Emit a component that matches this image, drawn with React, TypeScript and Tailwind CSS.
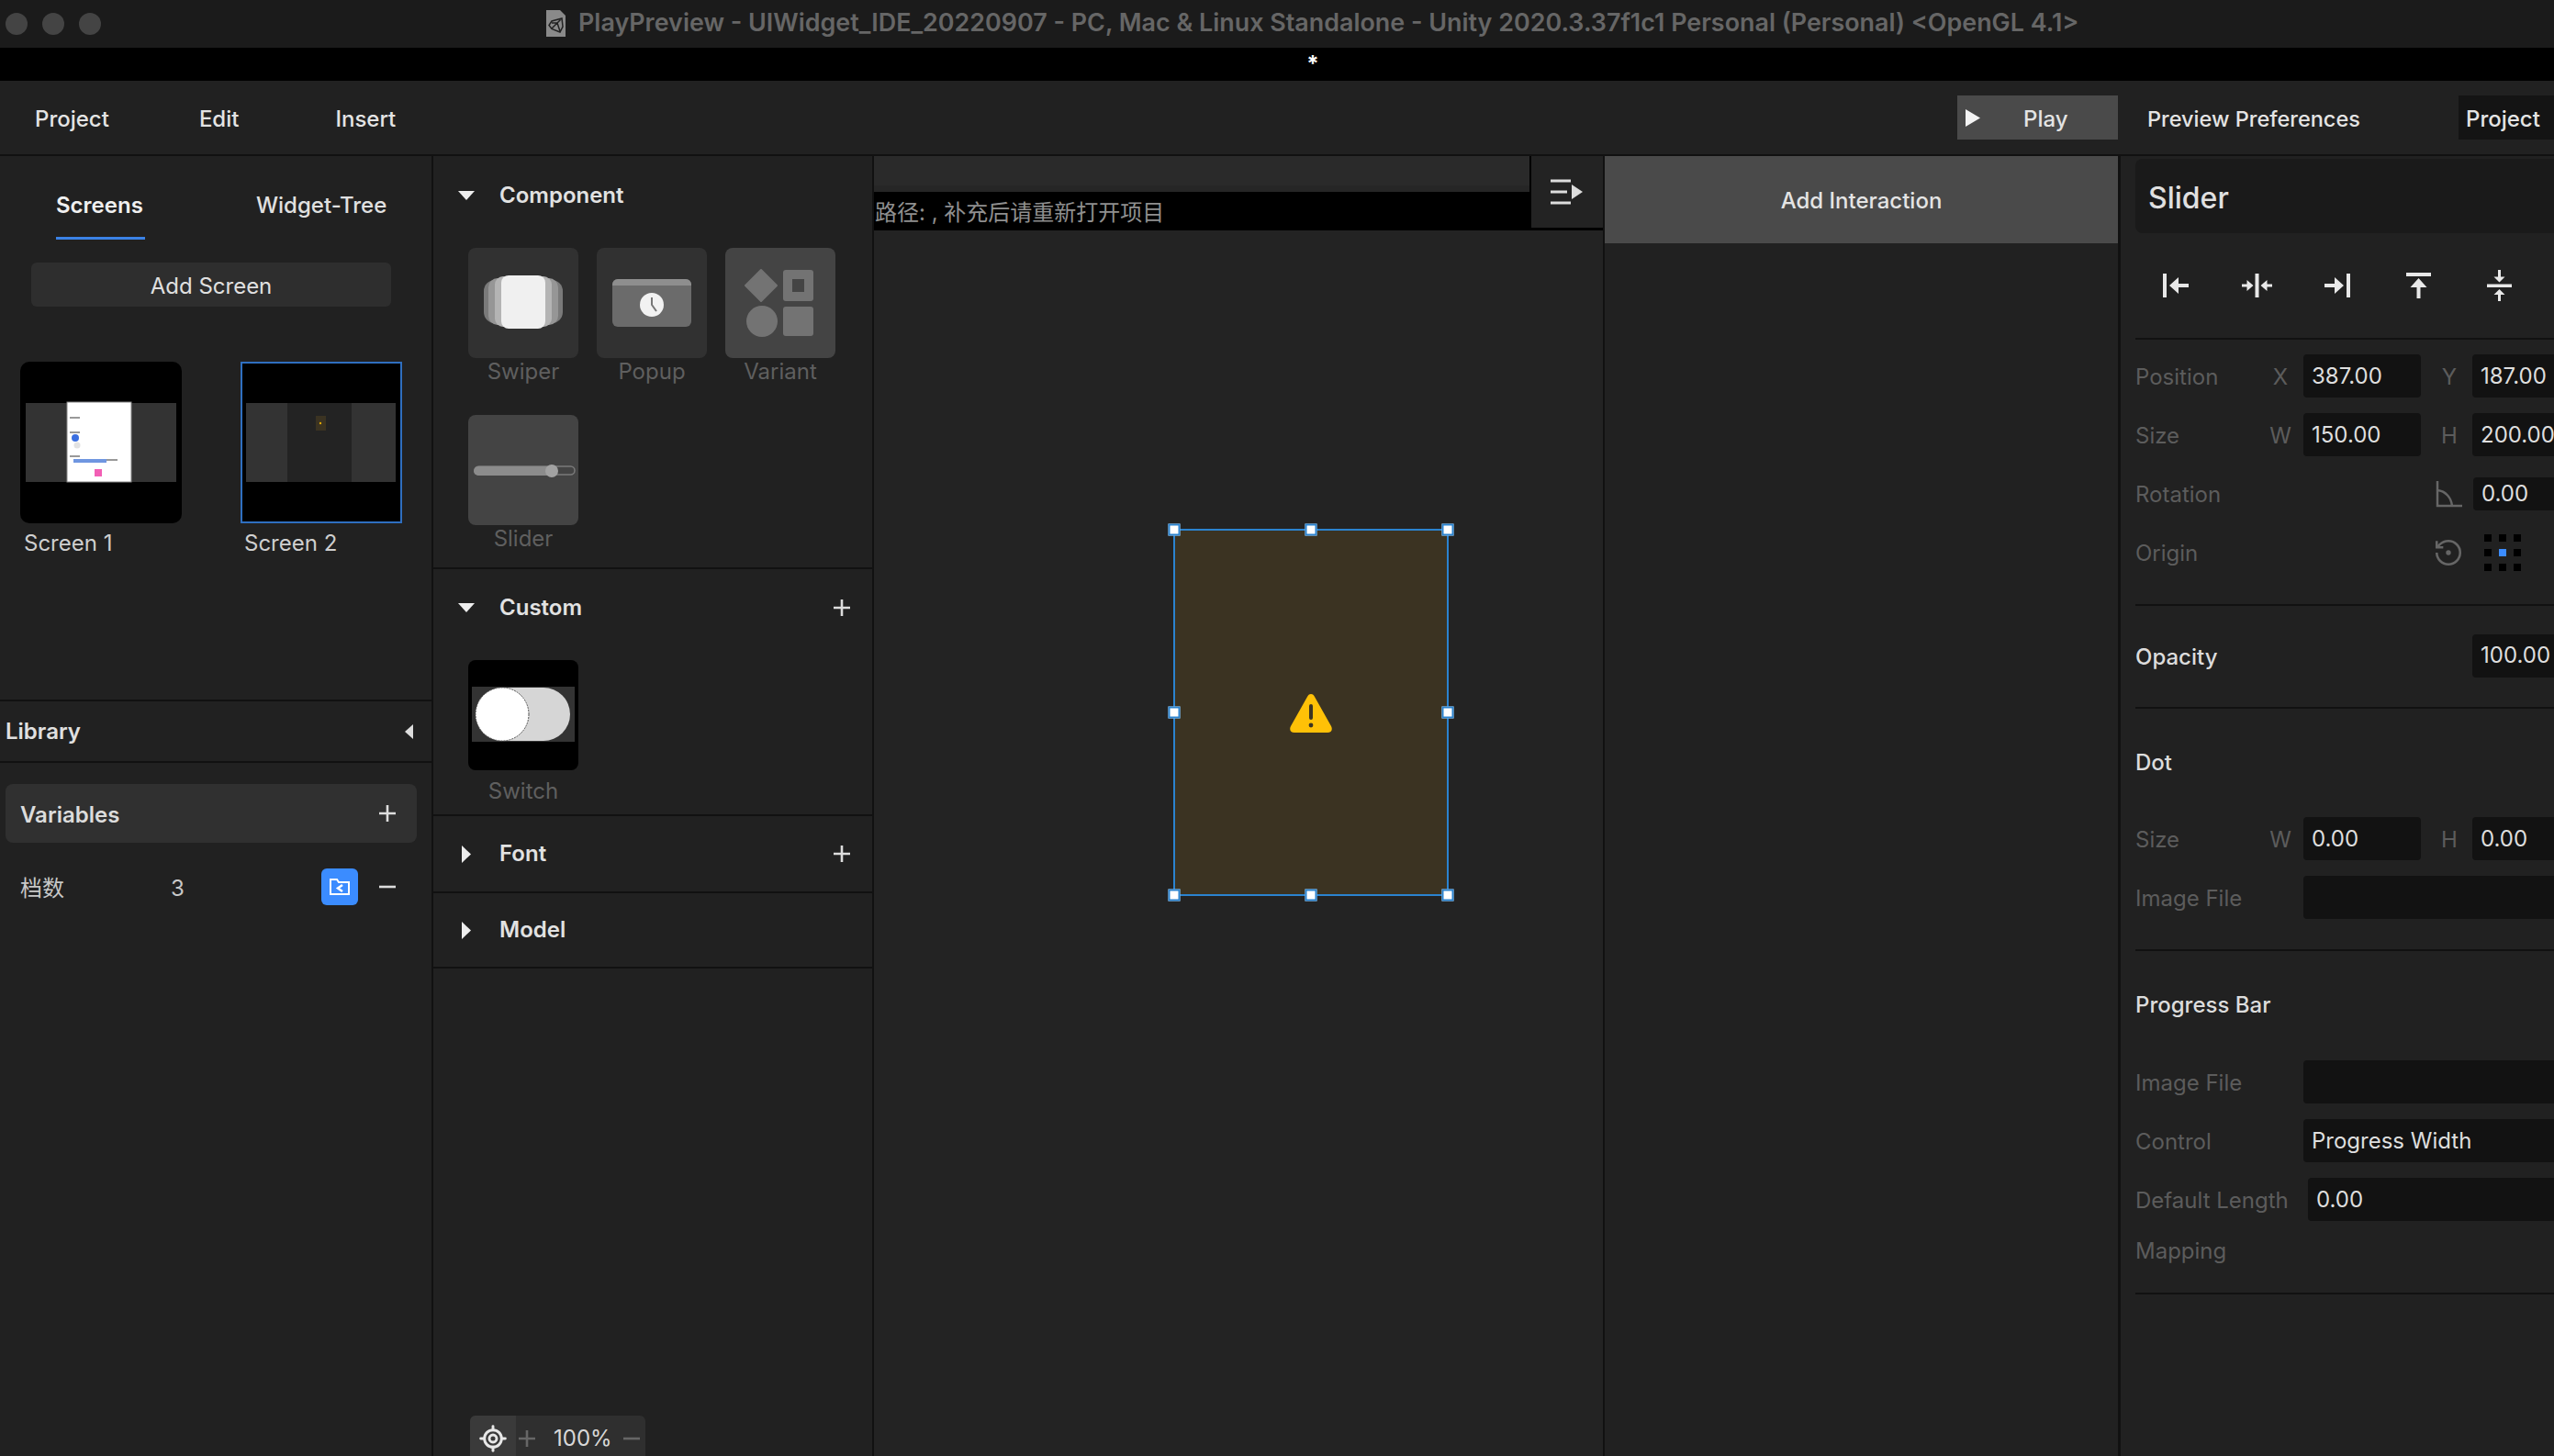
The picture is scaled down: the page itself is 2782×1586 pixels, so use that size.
import { LocateFixed } from 'lucide-react'

const inter = "font-['Inter','Noto_Sans_CJK_SC',sans-serif]"

/* ------------------------------------------------------------ small glyphs */
function TriDown() {
  return <svg width="18" height="10" viewBox="0 0 18 10" className="shrink-0"><path d="M0 0h18L9 10z" fill="#eee" /></svg>
}
function TriRight() {
  return <svg width="10" height="19" viewBox="0 0 10 19" className="shrink-0"><path d="M0 0l10 9.5L0 19z" fill="#eee" /></svg>
}
function Plus({ color = '#ddd', size = 20 }: { color?: string; size?: number }) {
  return <svg width={size} height={size} viewBox="0 0 20 20" className="shrink-0"><path d="M10 1v18M1 10h18" stroke={color} strokeWidth="2.6" /></svg>
}
function Minus({ color = '#ddd', size = 20 }: { color?: string; size?: number }) {
  return <svg width={size} height={size} viewBox="0 0 20 20" className="shrink-0"><path d="M1 10h18" stroke={color} strokeWidth="2.6" /></svg>
}

function AlignIcon({ kind }: { kind: 0 | 1 | 2 | 3 | 4 }) {
  const c = '#e8e8e8'
  return (
    <svg width="34" height="34" viewBox="0 0 34 34" className="shrink-0">
      {kind === 0 && <g fill={c}><rect x="3" y="4" width="4" height="26" /><path d="M10 17l10-9v7h11v4H20v7z" /></g>}
      {kind === 1 && <g fill={c}><rect x="15.5" y="4" width="4" height="26" /><path d="M13.500 17l-7-6v4.500H1v3h5.500V23zM21.500 17l7-6v4.500H34v3h-5.500V23z" /></g>}
      {kind === 2 && <g fill={c}><rect x="27" y="4" width="4" height="26" /><path d="M24 17l-10-9v7H3v4h11v7z" /></g>}
      {kind === 3 && <g fill={c}><rect x="4" y="3" width="27" height="4" /><path d="M17.500 9l9 10h-7v12h-4V19h-7z" /></g>}
      {kind === 4 && <g fill={c}><rect x="4" y="15.500" width="27" height="3.500" /><path d="M17.500 13.500l-6-6h4.500V0h3v7.500h4.500zM17.500 21l-6 6h4.500v7h3v-7h4.500z" /></g>}
    </svg>
  )
}

function UnityFile() {
  return (
    <svg width="21" height="29" viewBox="0 0 21 29" className="shrink-0">
      <path d="M0 0h15l6 6v23H0z" fill="#8a8a8a" />
      <path d="M17 9l1 9-3 6-9-3.500-3-4 3-4.500zM6 14h6l4-4M12 14l3 9M12 14l-6 6" fill="none" stroke="#222" strokeWidth="1.500" />
    </svg>
  )
}

/* -------------------------------------------------------- component tiles */
function SwiperArt() {
  return (
    <svg width="120" height="120" viewBox="0 0 120 120">
      <rect x="17" y="35" width="86" height="47" rx="12" fill="#7a7a7a" />
      <rect x="22" y="33" width="76" height="51" rx="10" fill="#969696" />
      <rect x="29" y="31" width="62" height="55" rx="9" fill="#b4b4b4" />
      <rect x="36" y="30" width="48" height="58" rx="8" fill="#f0f0f0" />
    </svg>
  )
}
function PopupArt() {
  return (
    <svg width="120" height="120" viewBox="0 0 120 120">
      <rect x="17" y="34" width="86" height="52" rx="6" fill="#6b6b6b" />
      <path d="M17 41v-1a6 6 0 0 1 6-6h74a6 6 0 0 1 6 6v1z" fill="#8e8e8e" />
      <circle cx="60" cy="62" r="13" fill="#f2f2f2" />
      <path d="M60 54v8l5 7" fill="none" stroke="#777" strokeWidth="2" />
    </svg>
  )
}
function VariantArt() {
  return (
    <svg width="120" height="120" viewBox="0 0 120 120">
      <path d="M39 24l17 17-17 17-17-17z" fill="#737373" stroke="#737373" strokeWidth="2" strokeLinejoin="round" />
      <rect x="63" y="24" width="33" height="34" rx="3" fill="#737373" />
      <rect x="73" y="34" width="13" height="14" fill="#444" />
      <circle cx="40" cy="80" r="17" fill="#737373" />
      <rect x="63" y="64" width="33" height="32" rx="3" fill="#737373" />
    </svg>
  )
}
function SliderArt() {
  return (
    <svg width="120" height="120" viewBox="0 0 120 120">
      <rect x="7" y="56" width="109" height="9" rx="4.500" fill="none" stroke="#7a7a7a" strokeWidth="1.500" />
      <rect x="6" y="56" width="86" height="10" rx="5" fill="#8c8c8c" />
      <circle cx="91" cy="61" r="7" fill="#a2a2a2" />
    </svg>
  )
}
function SwitchArt() {
  return (
    <svg width="120" height="120" viewBox="0 0 120 120">
      <rect x="4" y="29" width="112" height="60" fill="#333" />
      <rect x="8" y="30" width="103" height="58" rx="29" fill="#d6d6d6" />
      <circle cx="37" cy="59" r="29" fill="#fff" stroke="#555" strokeWidth="1" strokeDasharray="2 1" />
    </svg>
  )
}

function Tile({ label, bg, labelTop = 'mt-0', children }: { label: string; bg: string; labelTop?: string; children: React.ReactNode }) {
  return (
    <div className="w-[120px]">
      <div className={'h-[120px] w-[120px] overflow-hidden rounded-[8px] ' + bg}>{children}</div>
      <div className={'h-[30px] text-center text-[24px] leading-[30px] text-[#5f5f5f] ' + labelTop}>{label}</div>
    </div>
  )
}

function SectionHead({ title, open, plus }: { title: string; open: boolean; plus?: boolean }) {
  return (
    <div className="flex h-[24px] items-center pl-[27px] pr-[23px]">
      <span className="flex w-[45px] items-center">{open ? <TriDown /> : <span className="pl-[4px]"><TriRight /></span>}</span>
      <span className="text-[24px] font-semibold leading-[24px] text-[#e2e2e2]">{title}</span>
      {plus && <span className="ml-auto"><Plus /></span>}
    </div>
  )
}

/* ------------------------------------------------------------- thumbnails */
function Thumb1() {
  return (
    <svg width="176" height="176" viewBox="0 0 176 176" className="rounded-[10px] bg-black">
      <rect x="6" y="45" width="164" height="86" fill="#333" />
      <rect x="51" y="44" width="70" height="87" fill="#fff" stroke="#888" strokeWidth="1" />
      <g fill="#999">
        <rect x="54" y="60" width="11" height="2" />
        <rect x="54" y="76" width="11" height="2" />
        <rect x="54" y="102" width="11" height="2" />
      </g>
      <circle cx="60" cy="83" r="4" fill="#3a6ee0" />
      <circle cx="62" cy="91" r="3.500" fill="#e2e2e2" />
      <rect x="58" y="106" width="48" height="2" fill="#999" />
      <rect x="58" y="106" width="36" height="4" fill="#6f96e0" />
      <rect x="81" y="117" width="8" height="8" fill="#f25fb5" />
    </svg>
  )
}
function Thumb2() {
  return (
    <svg width="176" height="176" viewBox="0 0 176 176" className="bg-black">
      <rect x="6" y="45" width="163" height="86" fill="#333" />
      <rect x="51" y="45" width="70" height="86" fill="#232323" />
      <rect x="82" y="59" width="11" height="16" fill="#3b3322" />
      <circle cx="87" cy="67" r="1.200" fill="#e0a800" />
      <rect x="1" y="1" width="174" height="174" fill="none" stroke="#2f6fc0" strokeWidth="2" />
    </svg>
  )
}

/* --------------------------------------------------------- inspector rows */
function Box({ value, width = 'w-[128px]' }: { value?: string; width?: string }) {
  return <div className={'flex h-full shrink-0 items-center rounded-[4px] bg-[#121212] pl-[9px] text-[24px] text-[#dedede] ' + width}>{value}</div>
}
function Label({ text, w = 'w-[143px]' }: { text: string; w?: string }) {
  return <span className={'shrink-0 pt-[2px] text-[24px] text-[#5c5c5c] ' + w}>{text}</span>
}
function Axis({ text, className }: { text: string; className: string }) {
  return <span className={'w-[30px] shrink-0 pt-[2px] text-center text-[24px] text-[#5c5c5c] ' + className}>{text}</span>
}
function PairRow({ label, a, av, b, bv }: { label: string; a: string; av: string; b: string; bv: string }) {
  return (
    <div className="flex h-[47px] items-center">
      <Label text={label} />
      <Axis text={a} className="mr-[10px]" />
      <Box value={av} />
      <Axis text={b} className="ml-[16px] mr-[10px]" />
      <Box value={bv} />
    </div>
  )
}
function Divider() {
  return <div className="h-[2px] bg-[#111]" />
}

function Handle({ pos }: { pos: string }) {
  return <span className={'absolute h-[13px] w-[13px] -translate-x-1/2 -translate-y-1/2 border-2 border-[#2b83cf] bg-white ' + pos} />
}

export default function App() {
  return (
    <div className={'flex h-[1586px] w-[2782px] flex-col overflow-hidden bg-[#212121] ' + inter}>
      {/* title bar */}
      <div className="relative flex h-[52px] shrink-0 items-center bg-[#1b1b1b]">
        <div className="flex gap-[16px] pl-[6px]">
          <span className="h-[24px] w-[24px] rounded-full bg-[#444]" />
          <span className="h-[24px] w-[24px] rounded-full bg-[#444]" />
          <span className="h-[24px] w-[24px] rounded-full bg-[#444]" />
        </div>
        <div className="ml-[485px] flex items-center gap-[14px]">
          <UnityFile />
          <span className="-mt-[3px] whitespace-nowrap text-[26.9px] font-semibold text-[#666]">PlayPreview - UIWidget_IDE_20220907 - PC, Mac &amp; Linux Standalone - Unity 2020.3.37f1c1 Personal (Personal) &lt;OpenGL 4.1&gt;</span>
        </div>
      </div>
      <div className="flex h-[36px] shrink-0 items-center justify-center bg-black pl-[78px] text-[24px] font-bold leading-none text-white">*</div>

      {/* toolbar */}
      <div className="flex h-[82px] shrink-0 items-center border-b-2 border-[#111] bg-[#212121] text-[24px] font-medium text-[#e4e4e4]">
        <span className="ml-[38px] pt-[3px]">Project</span>
        <span className="ml-[98px] pt-[3px]">Edit</span>
        <span className="ml-[105px] pt-[3px]">Insert</span>
        <div className="ml-auto flex h-[48px] w-[175px] items-center bg-[#4a4a4a] pl-[9px]">
          <svg width="16" height="19" viewBox="0 0 16 19"><path d="M0 0l16 9.500L0 19z" fill="#f4f4f4" /></svg>
          <span className="ml-[47px] pt-[3px]">Play</span>
        </div>
        <span className="ml-[32px] w-[231px] whitespace-nowrap pt-[3px] text-[23.5px]">Preview Preferences</span>
        <div className="ml-[108px] flex h-[48px] w-[104px] items-center bg-[#141414] pl-[8px] pt-[3px]">Project</div>
      </div>

      <div className="flex min-h-0 flex-1">
        {/* left panel */}
        <div className="flex w-[472px] shrink-0 flex-col border-r-2 border-[#111]">
          <div className="h-[592px] shrink-0">
            <div className="flex pt-[42px]">
              <div className="ml-[61px] w-[97px]">
                <div className="h-[24px] text-[24px] font-semibold leading-[24px] text-[#f0f0f0]">Screens</div>
                <div className="mt-[22px] h-[3px] bg-[#3b82e6]" />
              </div>
              <div className="ml-[121px] h-[24px] text-[24px] font-medium leading-[24px] text-[#e0e0e0]">Widget-Tree</div>
            </div>
            <div className="ml-[34px] mt-[25px] flex h-[48px] w-[392px] items-center justify-center rounded-[6px] bg-[#2e2e2e] pt-[3px] text-[24px] text-[#e0e0e0]">Add Screen</div>
            <div className="ml-[22px] mt-[60px] flex gap-[64px]">
              <div>
                <Thumb1 />
                <div className="ml-[4px] mt-[10px] h-[24px] text-[24px] leading-[24px] text-[#cfcfcf]">Screen 1</div>
              </div>
              <div>
                <Thumb2 />
                <div className="ml-[4px] mt-[10px] h-[24px] text-[24px] leading-[24px] text-[#cfcfcf]">Screen 2</div>
              </div>
            </div>
          </div>
          <div className="flex h-[69px] shrink-0 items-center justify-between border-y-2 border-[#111] pl-[6px] pr-[20px]">
            <span className="text-[24px] font-semibold text-[#e0e0e0]">Library</span>
            <svg width="9" height="16" viewBox="0 0 9 16"><path d="M9 0L0 8l9 8z" fill="#ddd" /></svg>
          </div>
          <div className="ml-[6px] mt-[23px] flex h-[64px] w-[448px] items-center justify-between rounded-[8px] bg-[#303030] pl-[16px] pr-[22px]">
            <span className="pt-[3px] text-[24px] font-semibold text-[#dcdcdc]">Variables</span>
            <Plus />
          </div>
          <div className="mt-[28px] flex h-[40px] items-center pl-[22px]">
            <span className="w-[164px] pt-[3px] text-[24px] text-[#c8c8c8]">档数</span>
            <span className="w-[164px] pt-[3px] text-[24px] text-[#c8c8c8]">3</span>
            <span className="flex h-[40px] w-[40px] items-center justify-center rounded-[6px] bg-[#3b8cff]">
              <svg width="24" height="22" viewBox="0 0 24 22"><path d="M2 3h7l2 3h11v13H2z" fill="none" stroke="#fff" strokeWidth="2" /><path d="M15 9l-5 3.500 5 3.500" fill="none" stroke="#fff" strokeWidth="2.500" /></svg>
            </span>
            <span className="ml-[22px]"><Minus /></span>
          </div>
        </div>

        {/* component panel */}
        <div className="relative flex w-[480px] shrink-0 flex-col border-r-2 border-[#111]">
          <div className="h-[450px] shrink-0 border-b-2 border-[#111] pt-[31px]">
            <SectionHead title="Component" open />
            <div className="ml-[38px] mt-[45px] grid w-[400px] grid-cols-3 gap-x-[20px] gap-y-[32px]">
              <Tile label="Swiper" bg="bg-[#313131]"><SwiperArt /></Tile>
              <Tile label="Popup" bg="bg-[#313131]"><PopupArt /></Tile>
              <Tile label="Variant" bg="bg-[#444]"><VariantArt /></Tile>
              <Tile label="Slider" bg="bg-[#444]"><SliderArt /></Tile>
            </div>
          </div>
          <div className="h-[269px] shrink-0 border-b-2 border-[#111] pt-[30px]">
            <SectionHead title="Custom" open plus />
            <div className="ml-[38px] mt-[45px]">
              <Tile label="Switch" bg="bg-black" labelTop="mt-[8px]"><SwitchArt /></Tile>
            </div>
          </div>
          <div className="flex h-[84px] shrink-0 items-center border-b-2 border-[#111]">
            <div className="w-full"><SectionHead title="Font" open={false} plus /></div>
          </div>
          <div className="flex h-[82px] shrink-0 items-center border-b-2 border-[#111]">
            <div className="w-full"><SectionHead title="Model" open={false} /></div>
          </div>
          <div className="absolute -bottom-[6px] left-[40px] flex h-[50px] w-[191px] items-center rounded-t-[6px] bg-[#2f2f2f] text-[24px] text-[#d8d8d8]">
            <span className="flex h-full w-[50px] items-center justify-center rounded-tl-[6px] bg-[#3a3a3a]"><LocateFixed size={32} color="#e8e8e8" strokeWidth={2.2} /></span>
            <span className="ml-[2px]"><Plus color="#666" /></span>
            <span className="ml-[19px]">100%</span>
            <span className="ml-[11px]"><Minus color="#666" /></span>
          </div>
        </div>

        {/* canvas */}
        <div className="relative w-[796px] shrink-0 border-r-2 border-[#111] bg-[#232323]">
          <div className="flex h-[81px] bg-black">
            <div className="w-[714px] shrink-0">
              <div className="h-[39px] border-b-[7px] border-[#262626] bg-[#2a2a2a]" />
              <div className="h-[42px] whitespace-nowrap pl-[1px] text-[24px] leading-[45px] text-[#8f8f8f]">路径: , 补充后请重新打开项目</div>
            </div>
            <div className="ml-[2px] flex h-[78px] w-[78px] items-center justify-center bg-[#232323]">
              <svg width="36" height="30" viewBox="0 0 36 30">
                <path d="M0 3h22M0 15h18M0 27h22" stroke="#ddd" strokeWidth="3" />
                <path d="M23 7l12 8-12 8z" fill="#ddd" />
              </svg>
            </div>
          </div>
          {/* the selected widget */}
          <div className="absolute left-[326px] top-[406px] flex h-[400px] w-[300px] items-center justify-center border-2 border-[#2b83cf] bg-[#3b3322]">
            <svg width="48" height="45" viewBox="0 0 48 45">
              <path d="M24 2c2 0 3 1 4 3l18 32c2 4 0 7-4 7H6c-4 0-6-3-4-7L20 5c1-2 2-3 4-3z" fill="#ffc107" />
              <rect x="22" y="13" width="4" height="17" rx="2" fill="#3b3322" />
              <circle cx="24" cy="36" r="2.400" fill="#3b3322" />
            </svg>
            <Handle pos="left-[-1px] top-[-1px]" />
            <Handle pos="left-1/2 top-[-1px]" />
            <Handle pos="left-[calc(100%+1px)] top-[-1px]" />
            <Handle pos="left-[-1px] top-1/2" />
            <Handle pos="left-[calc(100%+1px)] top-1/2" />
            <Handle pos="left-[-1px] top-[calc(100%+1px)]" />
            <Handle pos="left-1/2 top-[calc(100%+1px)]" />
            <Handle pos="left-[calc(100%+1px)] top-[calc(100%+1px)]" />
          </div>
        </div>

        {/* interaction panel */}
        <div className="w-[562px] shrink-0 border-r-[3px] border-[#111]">
          <div className="flex h-[95px] items-center justify-center bg-[#4a4a4a] pt-[3px] text-[24px] font-medium text-[#e4e4e4]">Add Interaction</div>
        </div>

        {/* inspector */}
        <div className="min-w-0 flex-1 overflow-hidden pl-[16px]">
          <div className="mt-[3px] flex h-[81px] items-center rounded-l-[8px] bg-[#1a1a1a] pl-[14px] pt-[5px] text-[32px] font-medium text-[#e0e0e0]">Slider</div>
          <div className="flex h-[114px] items-center pl-[27px]">
            <div className="flex gap-[54px]">
              <AlignIcon kind={0} />
              <AlignIcon kind={1} />
              <AlignIcon kind={2} />
              <AlignIcon kind={3} />
              <AlignIcon kind={4} />
            </div>
          </div>
          <Divider />
          <div className="flex flex-col gap-[17px] pb-[33px] pt-[16px]">
            <PairRow label="Position" a="X" av="387.00" b="Y" bv="187.00" />
            <PairRow label="Size" a="W" av="150.00" b="H" bv="200.00" />
            <div className="flex h-[47px] items-center">
              <Label text="Rotation" w="w-[326px]" />
              <svg width="32" height="32" viewBox="0 0 32 32" className="shrink-0"><path d="M3 2v27h27M3 12c9 1 15 8 16 17" fill="none" stroke="#666" strokeWidth="2.500" /></svg>
              <span className="ml-[10px]"><Box value="0.00" /></span>
            </div>
            <div className="flex h-[47px] items-center">
              <Label text="Origin" w="w-[324px]" />
              <svg width="34" height="34" viewBox="0 0 24 24" fill="none" stroke="#666" strokeWidth="1.800" className="shrink-0">
                <path d="M3 12a9 9 0 1 0 9-9 9.750 9.750 0 0 0-6.740 2.740L3 8" />
                <path d="M3 3v5h5" />
                <circle cx="12" cy="12" r="1" fill="#666" />
              </svg>
              <div className="ml-[22px] grid grid-cols-3 gap-[8px]">
                {[0, 1, 2, 3, 4, 5, 6, 7, 8].map((i) => (
                  <span key={i} className={i === 4 ? 'h-[8px] w-[8px] bg-[#3b8cff]' : 'h-[8px] w-[8px] bg-black'} />
                ))}
              </div>
            </div>
          </div>
          <Divider />
          <div className="flex h-[110px] items-center pb-[2px]">
            <span className="w-[367px] shrink-0 pt-[3px] text-[24px] font-medium text-[#dcdcdc]">Opacity</span>
            <div className="h-[47px]"><Box value="100.00" /></div>
          </div>
          <Divider />
          <div className="pb-[33px] pt-[47px]">
            <div className="h-[24px] text-[24px] font-medium leading-[24px] text-[#dcdcdc]">Dot</div>
            <div className="mt-[47px] flex flex-col gap-[17px]">
              <PairRow label="Size" a="W" av="0.00" b="H" bv="0.00" />
              <div className="flex h-[47px] items-center">
                <Label text="Image File" w="w-[183px]" />
                <Box width="w-[300px]" />
              </div>
            </div>
          </div>
          <Divider />
          <div className="pb-[33px] pt-[47px]">
            <div className="h-[24px] text-[24px] font-medium leading-[24px] text-[#dcdcdc]">Progress Bar</div>
            <div className="mt-[48px] flex flex-col gap-[17px]">
              <div className="flex h-[47px] items-center">
                <Label text="Image File" w="w-[183px]" />
                <Box width="w-[300px]" />
              </div>
              <div className="flex h-[47px] items-center">
                <Label text="Control" w="w-[183px]" />
                <Box value="Progress Width" width="w-[300px]" />
              </div>
              <div className="flex h-[47px] items-center">
                <Label text="Default Length" w="w-[188px]" />
                <Box value="0.00" width="w-[300px]" />
              </div>
            </div>
            <div className="mt-[21px] h-[24px] text-[24px] leading-[24px] text-[#5c5c5c]">Mapping</div>
          </div>
          <Divider />
        </div>
      </div>
    </div>
  )
}
